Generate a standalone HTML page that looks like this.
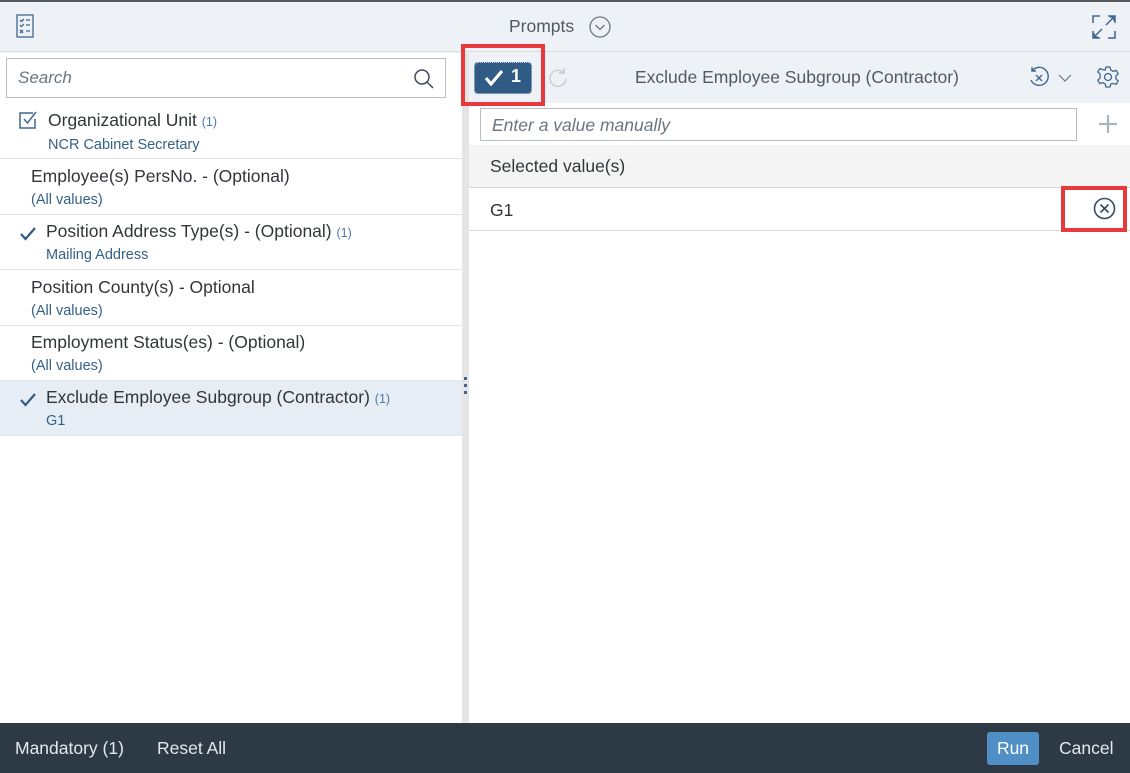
<!DOCTYPE html>
<html><head><meta charset="utf-8"><style>
*{box-sizing:border-box;margin:0;padding:0}
body{width:1130px;height:773px;overflow:hidden;background:#f1f4f7;font-family:"Liberation Sans",Arial,sans-serif;position:relative;color:#32363a}
.abs{position:absolute}
.top{left:0;top:0;width:1130px;height:2px;background:#555b61}
.hdr{left:0;top:2px;width:1130px;height:50px;background:#eef2f6;border-bottom:1px solid #d9dde1}
.left{left:0;top:53px;width:462px;height:670px;background:#fff}
.split{left:462px;top:53px;width:7px;height:670px;background:#e5e5e5}
.right{left:469px;top:53px;width:661px;height:670px;background:#fff}
.rh{left:469px;top:53px;width:661px;height:50px;background:#eef2f6}
.search{left:6px;top:58px;width:440px;height:40px;border:1px solid #b8bec5;background:#fff}
.item{left:0;width:462px;height:55px;border-bottom:1px solid #e1e3e5}
.t{position:absolute;font-size:17.5px;color:#32363a;white-space:nowrap}
.s{position:absolute;font-size:14.5px;color:#346187;white-space:nowrap}
.n{font-size:12.5px;color:#4b7aa8}
.foot{left:0;top:723px;width:1130px;height:50px;background:#2d3a46;color:#e4e8ec;font-size:17.5px}
.red{border:4px solid #e8393c}
</style></head><body>
<div class="abs top"></div>
<div class="abs hdr"></div>
<svg class="abs" style="left:16px;top:14px" width="18" height="24" viewBox="0 0 18 24" fill="none" stroke="#3e6690" stroke-width="1.3"><rect x="1" y="1" width="16" height="22"/><path d="M4 6l1.5 1.5L8 5M10 6h4M4 11l1.5 1.5L8 10M10 11h4M4 16l3 3M7 16l-3 3M10 17h4"/></svg>
<div class="abs" style="left:509px;top:16px;font-size:17.5px;color:#525a63">Prompts</div>
<svg class="abs" style="left:589px;top:16px" width="22" height="22" viewBox="0 0 22 22" fill="none" stroke="#6a7580" stroke-width="1.3"><circle cx="11" cy="11" r="10"/><path d="M6.5 9l4.5 4.5L15.5 9"/></svg>
<svg class="abs" style="left:1092px;top:15px" width="24" height="24" viewBox="0 0 24 24" fill="none" stroke="#3e6690" stroke-width="1.5"><path d="M1 8V1h7M16 1h7v7M23 16v7h-7M8 23H1v-7M14 10l8-8M18 2h4v4M10 14l-8 8M2 18v4h4"/></svg>
<div class="abs left"></div>
<div class="abs split"></div>
<div class="abs" style="left:464px;top:377px;width:3px;height:20px;background:repeating-linear-gradient(#3e6690 0 3px,transparent 3px 7px)"></div>
<div class="abs right"></div>
<div class="abs rh"></div>
<div class="abs search"><span style="position:absolute;left:11px;top:9px;font-style:italic;color:#6a7580;font-size:17px">Search</span>
<svg style="position:absolute;right:10px;top:9px" width="22" height="22" viewBox="0 0 22 22" fill="none" stroke="#3e4c5a" stroke-width="1.5"><circle cx="9" cy="9" r="7"/><path d="M14 14l6 6"/></svg></div>

<div class="abs item" style="top:104px">
<svg style="position:absolute;left:19px;top:7px" width="18" height="18" viewBox="0 0 18 18" fill="none" stroke="#3e6690" stroke-width="1.5"><path d="M14 2H1v15h15V8"/><path d="M5 8l3.5 4L17 1"/></svg>
<div class="t" style="left:48px;top:6px">Organizational Unit <span class="n">(1)</span></div>
<div class="s" style="left:48px;top:33px">NCR Cabinet Secretary</div></div>
<div class="abs item" style="top:160px"><div class="t" style="left:31px;top:6px">Employee(s) PersNo. - (Optional)</div><div class="s" style="left:31px;top:32px">(All values)</div></div>
<div class="abs item" style="top:215px">
<svg style="position:absolute;left:20px;top:12px" width="16" height="14" viewBox="0 0 16 14" fill="none" stroke="#2e5a85" stroke-width="2.2"><path d="M1 7l4.5 5L15 1"/></svg>
<div class="t" style="left:46px;top:6px">Position Address Type(s) - (Optional) <span class="n">(1)</span></div><div class="s" style="left:46px;top:32px">Mailing Address</div></div>
<div class="abs item" style="top:271px"><div class="t" style="left:31px;top:6px">Position County(s) - Optional</div><div class="s" style="left:31px;top:32px">(All values)</div></div>
<div class="abs item" style="top:326px"><div class="t" style="left:31px;top:6px">Employment Status(es) - (Optional)</div><div class="s" style="left:31px;top:32px">(All values)</div></div>
<div class="abs item" style="top:381px;background:#e6edf4">
<svg style="position:absolute;left:20px;top:12px" width="16" height="14" viewBox="0 0 16 14" fill="none" stroke="#2e5a85" stroke-width="2.2"><path d="M1 7l4.5 5L15 1"/></svg>
<div class="t" style="left:46px;top:6px">Exclude Employee Subgroup (Contractor) <span class="n">(1)</span></div><div class="s" style="left:46px;top:32px">G1</div></div>

<div class="abs red" style="left:461px;top:44px;width:84px;height:62px"></div>
<div class="abs" style="left:474px;top:62px;width:58px;height:32px;background:#2f5b84;border-radius:4px;border:1px dotted #c9d6e3"></div>
<svg class="abs" style="left:484px;top:69px" width="20" height="17" viewBox="0 0 20 17" fill="none" stroke="#fff" stroke-width="3.2"><path d="M2 9l5 6L18 2"/></svg>
<div class="abs" style="left:511px;top:66px;color:#fff;font-weight:bold;font-size:18px">1</div>
<svg class="abs" style="left:547px;top:66px" width="22" height="24" viewBox="0 0 22 24" fill="none" stroke="#c4cbd2" stroke-width="1.4"><path d="M17 7a8 8 0 1 0 2 6M17 2v5h-5"/></svg>
<div class="abs" style="left:635px;top:67px;font-size:17.5px;color:#525a63">Exclude Employee Subgroup (Contractor)</div>
<svg class="abs" style="left:1027px;top:65px" width="24" height="24" viewBox="0 0 24 24" fill="none" stroke="#3e6690" stroke-width="1.4"><path d="M5 6a9 9 0 1 1-1 9M5 2v4h4M9 10l6 6M15 10l-6 6"/></svg>
<svg class="abs" style="left:1058px;top:74px" width="14" height="9" viewBox="0 0 14 9" fill="none" stroke="#6a7580" stroke-width="1.2"><path d="M1 1l6 6 6-6"/></svg>
<svg class="abs" style="left:1097px;top:66px" width="22" height="22" viewBox="0 0 22 22" fill="none" stroke="#3e6690" stroke-width="1.3"><path d="M9 1h4l.7 3 2.5 1.4 3-1 2 3.4-2.3 2.2v2.8l2.3 2.2-2 3.4-3-1L13.7 18 13 21H9l-.7-3-2.5-1.4-3 1-2-3.4 2.3-2.2V8.2L.8 6l2-3.4 3 1L8.3 4z"/><circle cx="11" cy="11" r="3.5"/></svg>
<div class="abs" style="left:480px;top:108px;width:597px;height:33px;border:1px solid #b8bec5;background:#fff"><span style="position:absolute;left:11px;top:6px;font-style:italic;color:#6a7580;font-size:17.5px">Enter a value manually</span></div>
<svg class="abs" style="left:1098px;top:114px" width="20" height="20" viewBox="0 0 20 20" stroke="#a9b4be" stroke-width="2.2"><path d="M10 1v18M1 10h18"/></svg>
<div class="abs" style="left:469px;top:145px;width:661px;height:43px;background:#f4f4f4;border-bottom:1px solid #d9d9d9"><span style="position:absolute;left:21px;top:11px;font-size:17.5px;color:#32363a">Selected value(s)</span></div>
<div class="abs" style="left:469px;top:188px;width:661px;height:43px;background:#fff;border-bottom:1px solid #d9d9d9"><span style="position:absolute;left:21px;top:12px;font-size:17.5px">G1</span></div>
<div class="abs red" style="left:1061px;top:186px;width:66px;height:46px"></div>
<svg class="abs" style="left:1093px;top:197px" width="23" height="23" viewBox="0 0 23 23" fill="none" stroke="#2e4d6b" stroke-width="1.6"><circle cx="11.5" cy="11.5" r="10"/><path d="M7.5 7.5l8 8M15.5 7.5l-8 8"/></svg>

<div class="abs foot">
<span style="position:absolute;left:15px;top:15px">Mandatory (1)</span>
<span style="position:absolute;left:157px;top:15px">Reset All</span>
<div style="position:absolute;left:987px;top:9px;width:52px;height:33px;background:#4f8fc6;border-radius:3px;color:#fff;text-align:center;line-height:33px">Run</div>
<span style="position:absolute;left:1059px;top:15px">Cancel</span>
</div>
</body></html>
